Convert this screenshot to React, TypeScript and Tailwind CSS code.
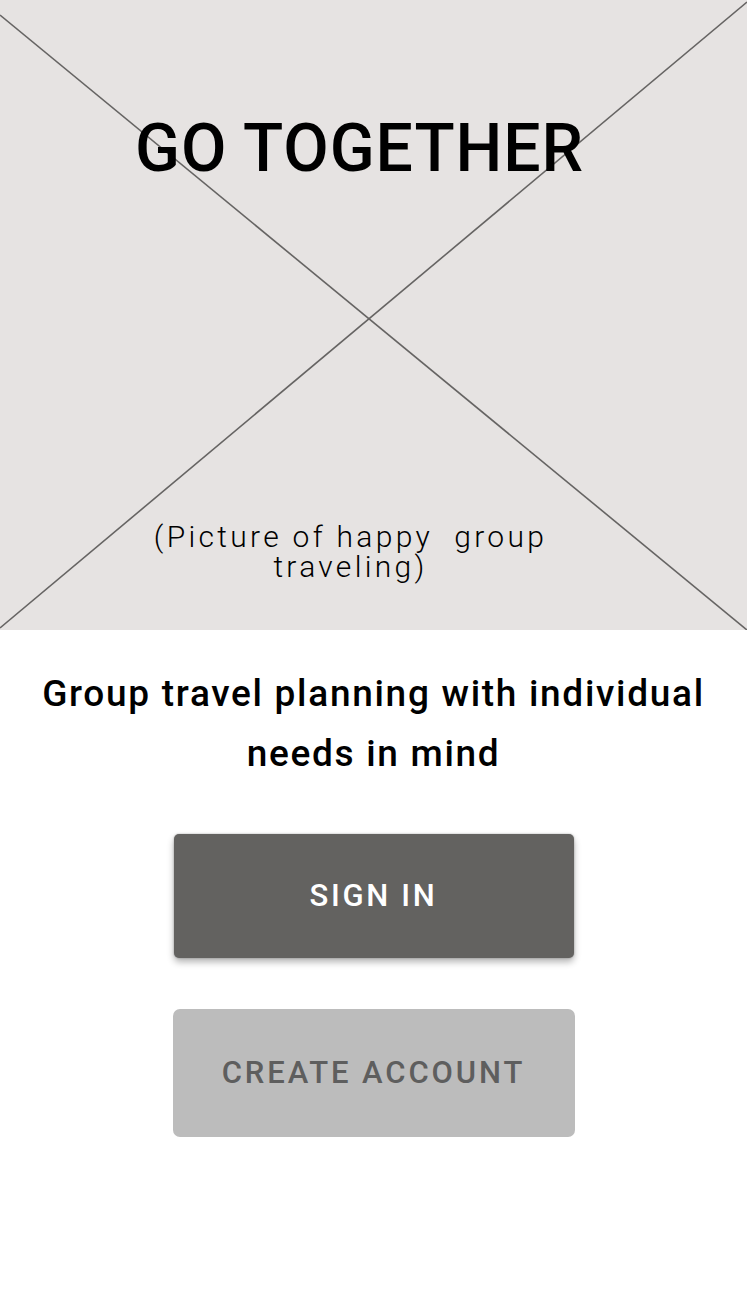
import React from "react";

export default function App() {
  return (
    <div
      className="w-[747px] min-h-[1289px] bg-white flex flex-col items-center"
      style={{ fontFamily: "Roboto, 'Noto Sans', sans-serif" }}
    >
      <div className="relative w-full h-[630px] bg-[#e6e3e2] flex flex-col items-center overflow-hidden">
        <svg
          className="absolute inset-0"
          width="747"
          height="630"
          viewBox="0 0 747 630"
        >
          <line x1="0" y1="15" x2="747" y2="630" stroke="#666463" strokeWidth="1.6" />
          <line x1="0" y1="628" x2="747" y2="2" stroke="#666463" strokeWidth="1.6" />
        </svg>
        <h1 className="relative w-full pt-[116px] pr-[28px] text-center text-[66px] leading-[66px] tracking-[0.9px] font-medium text-black">
          GO TOGETHER
        </h1>
        <p className="relative w-full mt-[340px] pr-[46px] text-center text-[30px] leading-[30px] tracking-[3.3px] font-light text-black whitespace-pre">
          {"(Picture of happy  group\ntraveling)"}
        </p>
      </div>

      <h2 className="mt-[34px] w-full text-center text-[37px] leading-[60px] tracking-[1.7px] font-medium text-black">
        Group travel planning with individual
        <br />
        needs in mind
      </h2>

      <button className="mt-[50px] w-[400px] h-[124px] rounded-[5px] bg-[#636260] text-white text-[31px] font-medium tracking-[2.7px] shadow-[0_4px_7px_rgba(0,0,0,0.3),0_0_2px_rgba(0,0,0,0.3)] flex items-center justify-center">
        SIGN IN
      </button>

      <button className="mt-[51px] w-[402px] h-[128px] rounded-[7px] bg-[#bcbcbc] text-[#5e5e5e] text-[31px] font-medium tracking-[2.9px] flex items-center justify-center">
        CREATE ACCOUNT
      </button>
    </div>
  );
}
